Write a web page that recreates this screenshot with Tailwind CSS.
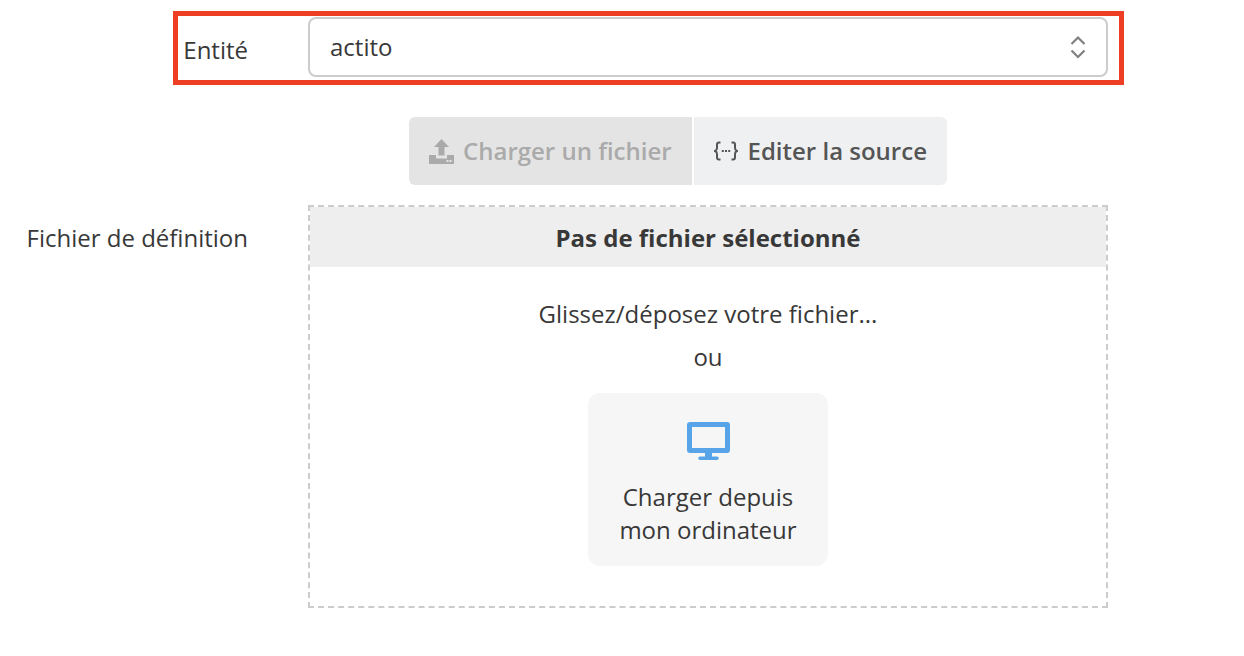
<!DOCTYPE html>
<html lang="fr">
<head>
    <meta charset="UTF-8">
    <title>Fichier de définition</title>
    <script src="https://cdn.jsdelivr.net/npm/@tailwindcss/browser@4"></script>
</head>
<body class="bg-white font-['Open_Sans',sans-serif] text-[#383838] text-[24px] leading-[32px] w-[1244px] h-[656px] overflow-hidden">

    <!-- Entity row, highlighted -->
    <div class="ml-[173px] mt-[11px] w-[951px] h-[74px] border-[5px] border-[#ee3f24] flex items-center">
        <label class="w-[70px] text-right mt-[4px]">Entité</label>
        <div class="ml-[60px] w-[800px] h-[60px] -mt-[2px] border-2 border-[#ccc] rounded-lg flex items-center justify-between pl-[20px] pr-[19px]">
            <span>actito</span>
            <svg class="w-[18px] h-[26px] text-[#808080]" viewBox="0 0 18 26" fill="none" stroke="currentColor" stroke-width="2.200">
                <path d="M2.500 10 9 3.500l6.500 6.500" />
                <path d="M2.500 16.500 9 23l6.500-6.500" />
            </svg>
        </div>
    </div>

    <!-- Source tabs -->
    <div class="ml-[409px] mt-[32px] flex font-semibold">
        <div class="w-[283px] h-[68px] bg-[#e4e4e4] rounded-l-md flex items-center pl-[20px] text-[#aaa]">
            <svg class="w-[25px] h-[25px] mr-[9px]" viewBox="0 0 25 25" fill="currentColor">
                <path d="M12.500 0 20 8h-4.500v8.500h-6V8H5z" />
                <path d="M0 16h7v3.500h11V16h7v9H0z" />
                <rect x="17.500" y="21" width="2" height="2" fill="#e4e4e4" />
                <rect x="20.500" y="21" width="2" height="2" fill="#e4e4e4" />
            </svg>
            <span>Charger un fichier</span>
        </div>
        <div class="w-[253px] h-[68px] ml-[2px] bg-[#eff0f2] rounded-r-md flex items-center pl-[20px] text-[#555]">
            <svg class="w-[24px] h-[20px] mr-[9.5px]" viewBox="0 0 24 20" fill="none" stroke="currentColor" stroke-width="2">
                <path d="M6.500 1.500H5C3.500 1.500 3 2.300 3 3.500V7C3 8.500 2.300 9.500 1 10c1.300.5 2 1.500 2 3v3.500c0 1.200.5 2 2 2h1.500" />
                <path d="M17.500 1.500H19c1.500 0 2 .8 2 2V7c0 1.500.7 2.500 2 3-1.300.5-2 1.500-2 3v3.500c0 1.200-.5 2-2 2h-1.500" />
                <path d="M7.800 10h2M11 10h2M14.200 10h2" />
            </svg>
            <span>Editer la source</span>
        </div>
    </div>

    <!-- File row -->
    <div class="mt-[20px] flex">
        <label class="w-[248px] text-right mt-[17px]">Fichier de définition</label>
        <div class="ml-[60px] w-[800px] h-[403px] border-2 border-dashed border-[#ccc] flex flex-col items-center">
            <div class="w-full h-[60px] bg-[#eee] flex items-center justify-center font-bold pt-[1px]">Pas de fichier sélectionné</div>
            <p class="mt-[31px]">Glissez/déposez votre fichier...</p>
            <p class="mt-[11px]">ou</p>
            <div class="mt-[20px] w-[240px] h-[173px] bg-[#f6f6f6] rounded-xl flex flex-col items-center text-center">
                <svg class="mt-[29px] w-[43px] h-[38px] text-[#58a4e8]" viewBox="0 0 43 38" fill="currentColor">
                    <path fill-rule="evenodd" d="M3 0h37a3 3 0 0 1 3 3v25a3 3 0 0 1-3 3H3a3 3 0 0 1-3-3V3a3 3 0 0 1 3-3zm2 5v21h33V5z" />
                    <path d="M18 31h7v3.500h5a1.750 1.750 0 0 1 0 3.500H13a1.750 1.750 0 0 1 0-3.500h5z" />
                </svg>
                <p class="mt-[20px] leading-[33px]">Charger depuis<br>mon ordinateur</p>
            </div>
        </div>
    </div>

</body>
</html>
